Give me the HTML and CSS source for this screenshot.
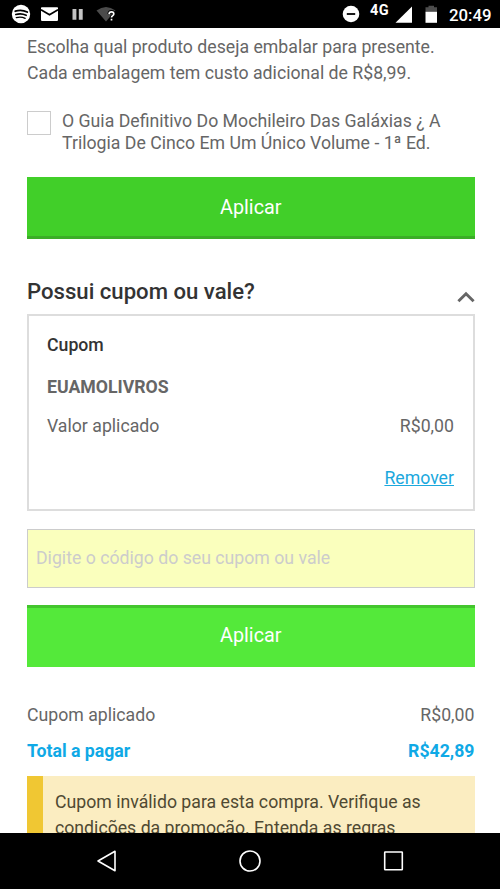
FILE: index.html
```html
<!DOCTYPE html>
<html lang="pt-BR">
<head>
<meta charset="utf-8">
<title>Cupom</title>
<link rel="stylesheet" href="styles.css">
</head>
<body>
<div class="phone">
  <header class="status">
    <svg class="status-icons" width="120" height="28" viewBox="0 0 120 28">
      <circle cx="21" cy="14" r="9.2" fill="#fff"/>
      <g fill="none" stroke="#000" stroke-linecap="round">
        <path d="M15.3 11.2Q21.5 9.2 27.2 12" stroke-width="1.9"/>
        <path d="M15.8 14.5Q21.3 12.9 26.2 15.3" stroke-width="1.6"/>
        <path d="M16.3 17.6Q21 16.3 25.2 18.3" stroke-width="1.3"/>
      </g>
      <rect x="41" y="7.3" width="17" height="13.6" rx=".8" fill="#fff"/>
      <path d="M41 9.8L49.5 14.7L58 9.8" fill="none" stroke="#000" stroke-width="1.7"/>
      <path d="M72.5 9h3.9v10.8h-3.9zM78.8 9h3.9v10.8h-3.9z" fill="#c4c4c4"/>
      <path d="M96.5 10.5Q106 3.5 115.5 10.5L106 21.5Z" fill="#4b4b4b"/>
      <path d="M109.1 14.1Q109.2 11.8 111.5 11.8T113.8 14Q113.8 15 112.5 15.9Q111.5 16.6 111.5 17.5M111.5 18.7v1.8" fill="none" stroke="#000" stroke-width="3.4"/>
      <path d="M109.1 14.1Q109.2 11.8 111.5 11.8T113.8 14Q113.8 15 112.5 15.9Q111.5 16.6 111.5 17.5M111.5 18.7v1.8" fill="none" stroke="#fff" stroke-width="1.7"/>
    </svg>
    <div class="status-right">
      <svg width="18" height="28" viewBox="0 0 18 28"><circle cx="9" cy="14" r="8.3" fill="#fff"/><path d="M4.8 14h8.4" stroke="#000" stroke-width="1.8"/></svg>
      <span class="network">4G</span>
      <svg width="17" height="28" viewBox="0 0 17 28"><path d="M.5 22.8L17 6.5V22.8Z" fill="#fff"/></svg>
      <svg class="battery" width="12" height="28" viewBox="0 0 12 28"><path d="M.5 7.3h3V5.8h5.5v1.5H12v5H.5z" fill="#4d4d4d"/><path d="M.5 11.8H12v11H.5z" fill="#fff"/></svg>
      <span class="clock">20:49</span>
    </div>
  </header>

  <main class="content">
    <p class="intro">Escolha qual produto deseja embalar para presente.<br>Cada embalagem tem custo adicional de R$8,99.</p>
    <label class="product">
      <span class="checkbox"></span>
      <span class="product-name">O Guia Definitivo Do Mochileiro Das Galáxias ¿ A<br>Trilogia De Cinco Em Um Único Volume - 1ª Ed.</span>
    </label>
    <button class="button">Aplicar</button>

    <div class="section-head">
      <h2>Possui cupom ou vale?</h2>
      <svg width="18" height="12" viewBox="0 0 18 12"><path d="M1.4 10.3L9 2.7L16.6 10.3" fill="none" stroke="#666" stroke-width="2.9"/></svg>
    </div>
    <section class="coupon">
      <h3>Cupom</h3>
      <strong class="code">EUAMOLIVROS</strong>
      <div class="row"><span>Valor aplicado</span><span>R$0,00</span></div>
      <a class="remove">Remover</a>
    </section>
    <div class="field">Digite o código do seu cupom ou vale</div>
    <button class="button button-active">Aplicar</button>

    <div class="row applied"><span>Cupom aplicado</span><span>R$0,00</span></div>
    <div class="row total"><span>Total a pagar</span><span>R$42,89</span></div>
    <div class="alert">Cupom inválido para esta compra. Verifique as<br>condições da promoção. Entenda as regras</div>
  </main>

  <nav class="navbar">
    <svg width="500" height="56" viewBox="0 0 500 56" fill="none" stroke="#fff" stroke-width="1.6">
      <path d="M98 28L115 18.3V37.7Z" stroke-linejoin="round"/>
      <circle cx="250" cy="28" r="10"/>
      <rect x="384.7" y="19" width="17.6" height="17.8" rx=".5"/>
    </svg>
  </nav>
</div>
</body>
</html>
```
FILE: styles.css
```css
* { box-sizing: border-box; }
body { margin: 0; background: #fff; font-family: Roboto, sans-serif; }
.phone { width: 500px; height: 889px; display: flex; flex-direction: column; overflow: hidden; }
.status { height: 28px; flex: none; background: #000; color: #fff; display: flex; justify-content: space-between; }
.status-right { display: flex; padding-right: 9px; }
.network { width: 20px; margin: 0 5px 0 10px; font-size: 14.5px; line-height: 21px; font-weight: 700; letter-spacing: .5px; }
.battery { margin: 0 12px 0 13px; }
.clock { width: 42px; font-size: 16.8px; line-height: 30px; font-weight: 500; white-space: nowrap; }

.content { flex: 1; min-height: 0; overflow: hidden; padding: 6px 25.5px 0 27px; color: #666; font-size: 17.7px; line-height: 21px; white-space: nowrap; }
.intro { margin: 0; line-height: 26px; }
.product { display: flex; gap: 11px; margin-top: 24px; height: 67px; line-height: 21.5px; }
.product-name { padding-top: 1px; }
.checkbox { width: 24px; height: 24px; margin-top: 1px; border: 1px solid #ccc; }
.button { display: block; width: 100%; height: 62px; border: 0; border-bottom: 3px solid #3bad27; background: #41cf29; color: #fff; font: 19.8px/59px Roboto, sans-serif; padding: 1px 0 0; text-align: center; }
.section-head { display: flex; justify-content: space-between; margin-top: 38px; height: 37px; }
.section-head h2 { margin: 0; font-size: 22.15px; line-height: 29px; font-weight: 500; color: #333; }
.section-head svg { margin-top: 14px; }
.coupon { height: 197px; border: 2px solid #ddd; padding: 19px 18.5px 0 18px; display: flex; flex-direction: column; }
.coupon h3 { margin: 0; font-size: 17.7px; font-weight: 500; color: #333; }
.code { margin-top: 21px; font-weight: 700; }
.row { display: flex; justify-content: space-between; }
.coupon .row { margin-top: 18px; }
.remove { align-self: flex-end; margin-top: 31px; color: #1ba8dd; text-decoration: underline; }
.field { height: 59px; margin: 18px 0 17px; border: 1px solid #ccc; background: #faffbd; color: #ccc; padding-left: 8px; line-height: 56px; }
.button-active { border-bottom: 0; border-top: 3px solid #43c52d; background: #54e93a; line-height: 56px; padding: 0 0 3px; }
.applied { margin-top: 38px; }
.total { margin-top: 15px; color: #0fa9e6; font-weight: 700; }
.alert { margin-top: 14px; height: 90px; border-left: 16px solid #f0c733; background: #fbedc1; color: #4f4932; padding: 13px 0 0 12px; line-height: 26px; }
.navbar { height: 56px; flex: none; background: #000; }
.navbar svg { display: block; }
```
